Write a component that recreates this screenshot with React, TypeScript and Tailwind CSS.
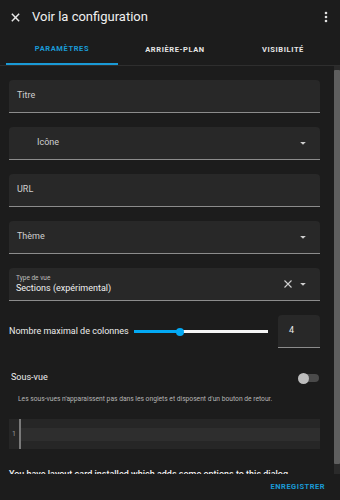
import React from 'react';

const font = { fontFamily: 'Roboto, "Noto Sans", sans-serif' };

const Caret = () => (
  <svg width="10" height="10" viewBox="0 0 10 10" className="shrink-0">
    <path d="M2.2 4h5.6L5 6.8z" fill="#d0d0d0" />
  </svg>
);

const Field = ({ label, indent = false, caret = false }: { label: string; indent?: boolean; caret?: boolean }) => (
  <div className="h-[33px] mb-[14px] bg-[#282828] rounded-t-[4px] border-b border-[#8c8c8c] flex items-center pr-[12px]">
    <span className={`flex-1 text-[9px] text-[#cfcfcf] ${indent ? 'pl-[28px]' : 'pl-[8px]'}`}>{label}</span>
    {caret && <Caret />}
  </div>
);

export default function App() {
  return (
    <div className="w-[340px] h-[500px] bg-[#1c1c1c] text-white flex flex-col overflow-hidden" style={font}>
      {/* header */}
      <div className="h-[34px] flex items-center pl-[10px] pr-[12px] shrink-0">
        <svg width="11" height="11" viewBox="0 0 12 12">
          <path d="M2 2l8 8M10 2l-8 8" stroke="#e8e8e8" strokeWidth="1.6" />
        </svg>
        <span className="ml-[11px] flex-1 text-[13px] text-[#f0f0f0]">Voir la configuration</span>
        <svg width="4" height="12" viewBox="0 0 4 12">
          <circle cx="2" cy="2" r="1.3" fill="#e0e0e0" />
          <circle cx="2" cy="6" r="1.3" fill="#e0e0e0" />
          <circle cx="2" cy="10" r="1.3" fill="#e0e0e0" />
        </svg>
      </div>
      {/* tabs */}
      <div className="h-[32px] flex border-b border-[#2e2e2e] shrink-0 pl-[6px]">
        <div className="w-[112px] flex items-center justify-center text-[7.5px] font-bold tracking-[0.6px] text-[#1a9ad6] border-b-2 border-[#1a9ad6]">
          PARAMÈTRES
        </div>
        <div className="w-[114px] flex items-center justify-center text-[7.5px] font-bold tracking-[0.6px] text-[#e6e6e6]">
          ARRIÈRE-PLAN
        </div>
        <div className="w-[102px] flex items-center justify-center text-[7.5px] font-bold tracking-[0.6px] text-[#e6e6e6]">
          VISIBILITÉ
        </div>
      </div>
      {/* body */}
      <div className="flex flex-1 min-h-0">
        <div className="flex-1 overflow-hidden pl-[9px] pr-[14px] pt-[14px]">
          <Field label="Titre" />
          <Field label="Icône" indent caret />
          <Field label="URL" />
          <Field label="Thème" caret />
          <div className="h-[33px] bg-[#282828] rounded-t-[4px] border-b border-[#8c8c8c] flex items-center pr-[12px]">
            <div className="flex-1 pl-[7px] flex flex-col leading-none">
              <span className="text-[6.5px] text-[#bdbdbd]">Type de vue</span>
              <span className="text-[9px] text-[#f0f0f0] mt-[3px]">Sections (expérimental)</span>
            </div>
            <svg width="10" height="10" viewBox="0 0 10 10" className="mr-[5px]">
              <path d="M1.5 1.5l7 7M8.5 1.5l-7 7" stroke="#d0d0d0" strokeWidth="1.1" />
            </svg>
            <Caret />
          </div>
          {/* slider row */}
          <div className="flex items-center mt-[14px] h-[33px]">
            <span className="text-[9px] text-[#ececec] w-[125px] whitespace-nowrap">Nombre maximal de colonnes</span>
            <div className="w-[134px] relative h-[10px] flex items-center">
              <div className="h-[3px] w-[46px] bg-[#03a9f4]" />
              <div className="h-[3px] flex-1 bg-[#f5f5f5]" />
              <div className="absolute left-[42px] top-[1px] w-[8px] h-[8px] rounded-full bg-[#03a9f4]" />
            </div>
            <div className="ml-auto w-[42px] h-[33px] bg-[#282828] rounded-t-[4px] border-b border-[#8c8c8c] flex items-center pl-[11px] text-[9px] text-[#ececec]">
              4
            </div>
          </div>
          {/* sous-vue */}
          <div className="flex items-center mt-[23px] pl-[2px] pr-[1px] h-[14px]">
            <span className="flex-1 text-[9px] text-[#ececec]">Sous-vue</span>
            <div className="relative w-[20px] h-[8px] rounded-full bg-[#4a4a4a] flex items-center">
              <div className="absolute left-[-1px] w-[11px] h-[11px] rounded-full bg-[#bdbdbd]" />
            </div>
          </div>
          <p className="mt-[9px] pl-[9px] text-[6.7px] text-[#b5b5b5] whitespace-nowrap">
            Les sous-vues n'apparaissent pas dans les onglets et disposent d'un bouton de retour.
          </p>
          {/* code editor */}
          <div className="mt-[15px] h-[30px] bg-[#262626] flex">
            <div className="w-[12px] flex items-center justify-center text-[7px] text-[#9a9a9a] border-r-2 border-[#7a7a7a]">
              1
            </div>
            <div className="flex-1 flex items-center">
              <div className="w-full h-[13px] bg-[#2e2e2e]" />
            </div>
          </div>
          <p className="mt-[19px] text-[9px] font-medium text-[#f0f0f0] whitespace-nowrap">
            You have layout card installed which adds some options to this dialog
          </p>
        </div>
        {/* scrollbar */}
        <div className="w-[6px] bg-[#2a2a2a] flex flex-col">
          <div className="h-[4px]" />
          <div className="flex-1 bg-[#5e5e5e] rounded-[1px]" />
          <div className="h-[10px]" />
        </div>
      </div>
      {/* footer */}
      <div className="h-[26px] shrink-0 flex items-center justify-end pr-[15px]">
        <span className="text-[7.5px] font-bold tracking-[0.5px] text-[#1a9ad6]">ENREGISTRER</span>
      </div>
    </div>
  );
}
